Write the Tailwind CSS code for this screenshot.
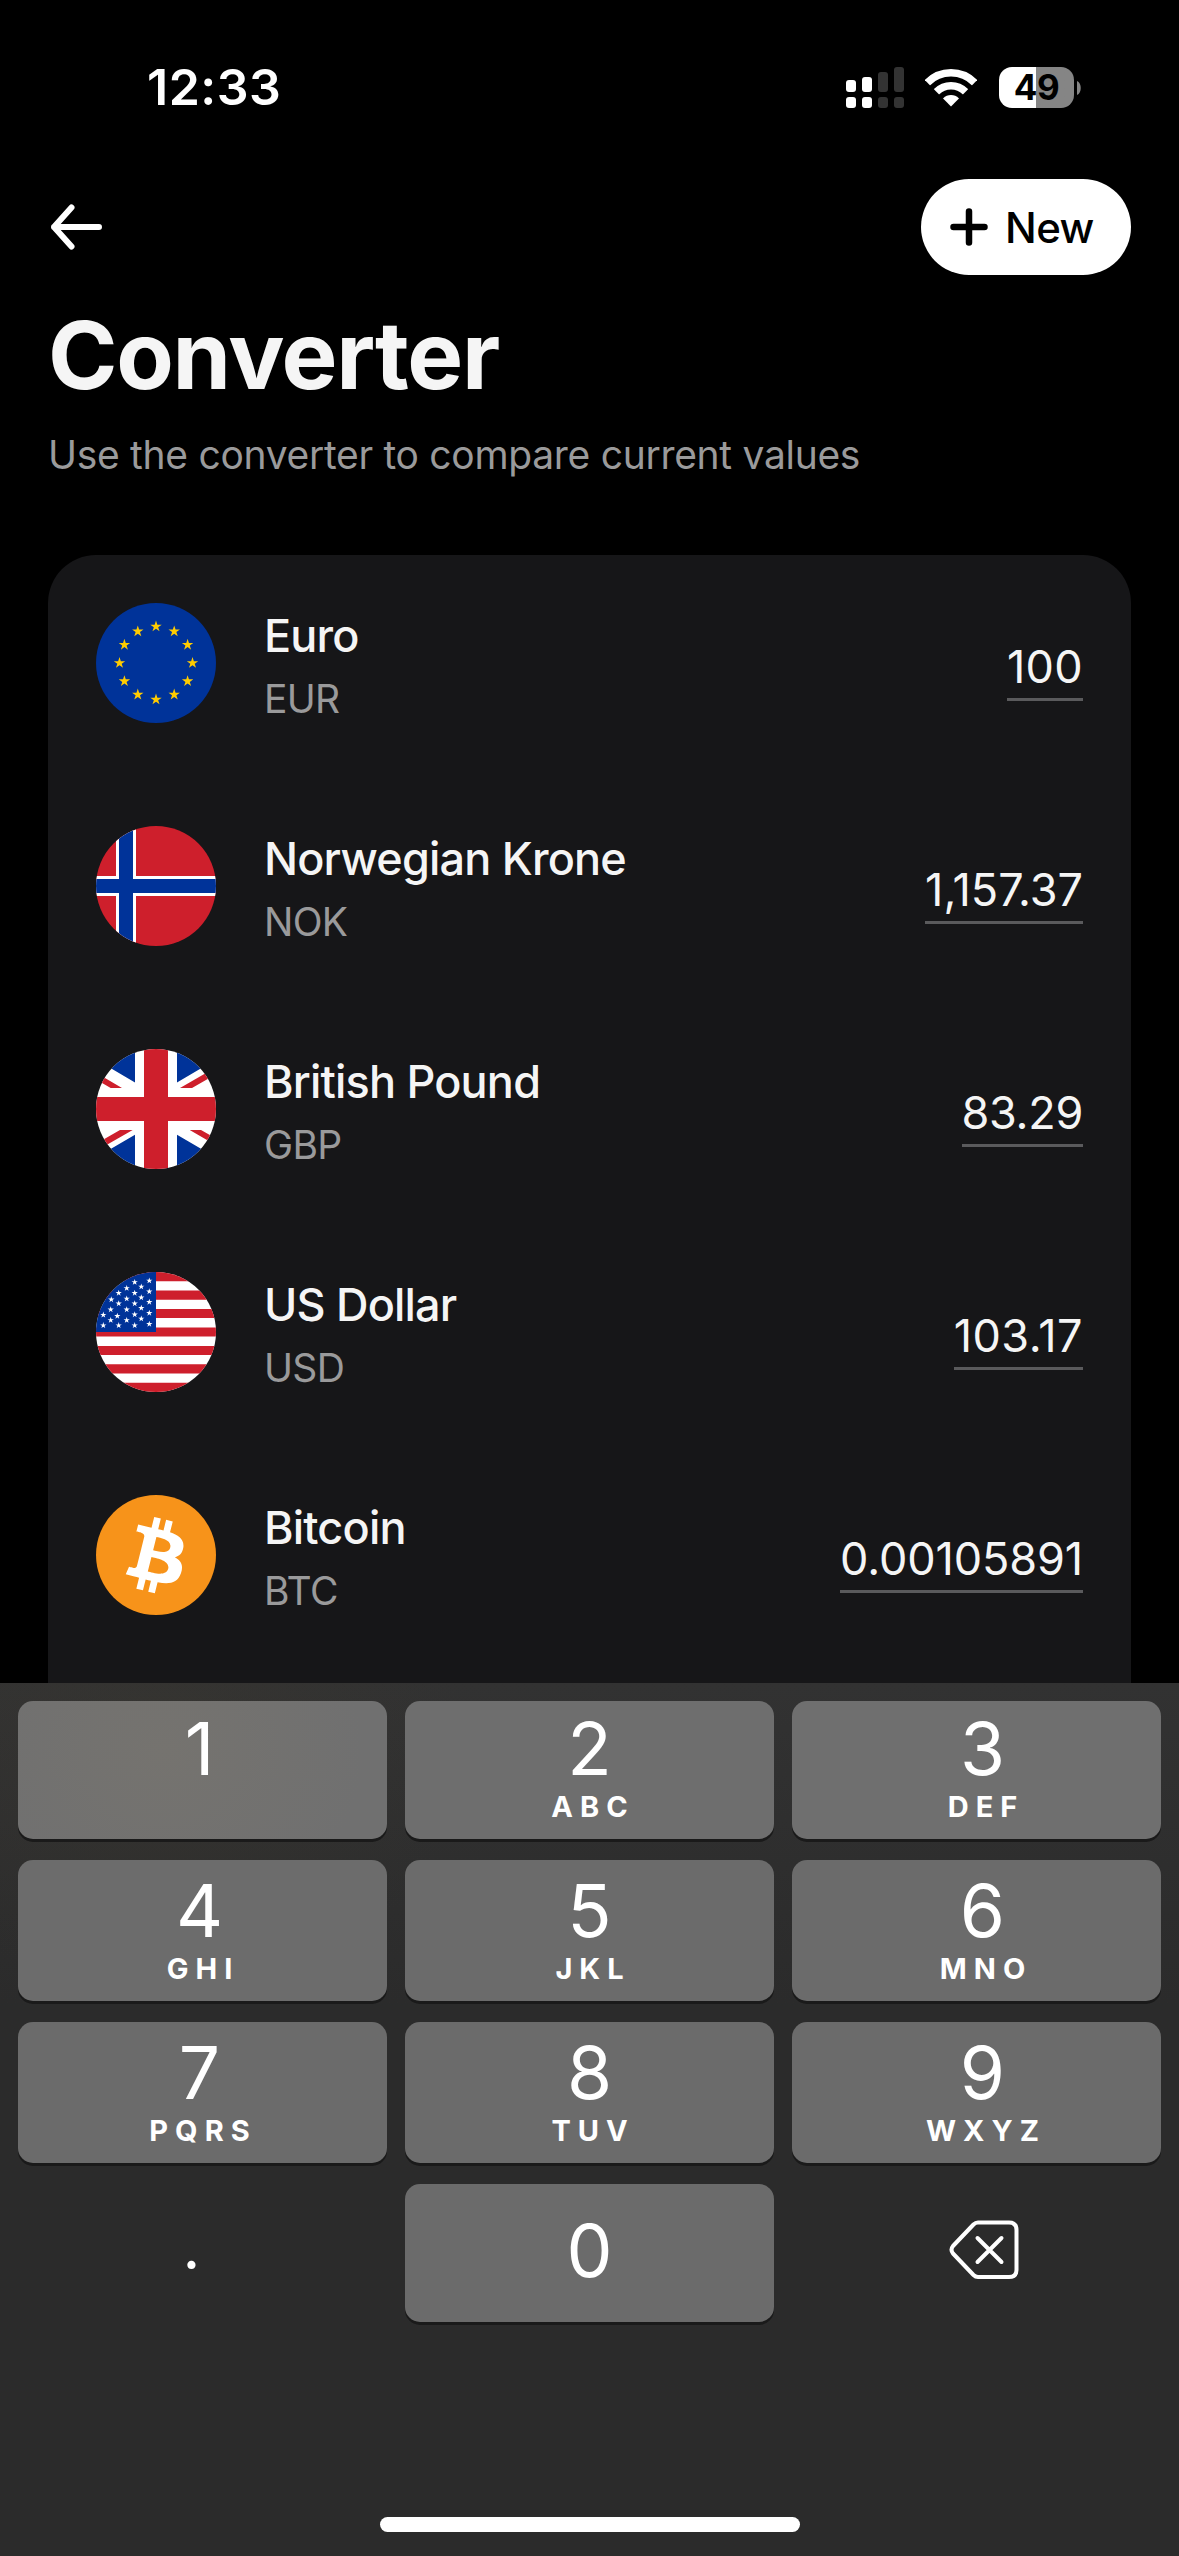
<!DOCTYPE html>
<html lang="en">
<head>
  <meta charset="UTF-8">
  <meta name="viewport" content="width=device-width, initial-scale=1.0">
  <title>Converter</title>
  <script src="https://cdn.jsdelivr.net/npm/@tailwindcss/browser@4"></script>
</head>
<body class="bg-black">
  <!-- shared star shape for the flags, radius 1 -->
  <svg class="hidden">
    <defs>
      <path id="star" d="M0-1 .225-.309H.951L.363.118.588.809 0 .382-.588.809-.363.118-.951-.309H-.225Z" />
    </defs>
  </svg>

  <div class="flex flex-col w-[1179px] h-[2556px] overflow-hidden bg-black text-[#f5f5f5] font-['Inter',sans-serif]">

    <!-- Status bar -->
    <div class="flex justify-between h-[179px] pt-[57px] pl-[147px] pr-[98px] text-white">
      <div class="text-[50px] leading-[61px] font-semibold tracking-[0.5px]">12:33</div>
      <div class="flex items-start pt-[10px]">
        <svg class="w-[59px] h-[41px]" viewBox="0 0 59 41" fill="#fff">
          <rect x="0" y="13" width="10" height="12" rx="3" />
          <rect x="16" y="10" width="10" height="15" rx="3" />
          <rect x="32" y="5" width="10" height="20" rx="3" fill="#333" />
          <rect x="48" y="0" width="10" height="25" rx="3" fill="#333" />
          <rect x="0" y="30" width="10" height="11" rx="3" />
          <rect x="16" y="30" width="10" height="11" rx="3" />
          <rect x="32" y="30" width="10" height="11" rx="3" fill="#333" />
          <rect x="48" y="30" width="10" height="11" rx="3" fill="#333" />
        </svg>
        <svg class="w-[52px] h-[38px] ml-[20px] mt-[2px]" viewBox="0 0 52 38" fill="none" stroke="#fff">
          <clipPath id="wedge"><path d="M26 37.500-12-1V-10H64V-1Z" /></clipPath>
          <g clip-path="url(#wedge)" stroke-width="7.600">
            <circle cx="26" cy="37" r="33.200" />
            <circle cx="26" cy="37" r="20.300" />
            <circle cx="26" cy="37" r="11" fill="#fff" stroke="none" />
          </g>
        </svg>
        <div class="flex items-center justify-center w-[75px] h-[41px] ml-[22px] rounded-[13px] bg-linear-to-r from-white from-[49%] to-[#858585] to-[49%] text-black text-[35px] leading-[41px] font-bold tracking-[-0.5px]">49</div>
        <svg class="w-[4px] h-[14px] ml-[3px] mt-[14px]" viewBox="0 0 4 14" fill="#858585"><path d="M0 0C5 2 5 12 0 14Z" /></svg>
      </div>
    </div>

    <!-- Header -->
    <div class="flex items-center justify-between h-24 px-12">
      <svg class="w-[56px] h-[56px]" viewBox="0 0 56 56" fill="none" stroke="#fff" stroke-width="6" stroke-linecap="round" stroke-linejoin="round">
        <path d="M51 28H6M23.500 8.500 6 28 23.500 47.500" />
      </svg>
      <button class="flex items-center w-[210px] h-24 pl-[29px] rounded-full bg-white text-black text-[42px] leading-[51px] font-medium tracking-[-0.6px]">
        <svg class="w-[38px] h-[38px] mr-[17px]" viewBox="0 0 38 38" stroke="#000" stroke-width="6.500" stroke-linecap="round">
          <path d="M19 3.500V34.500M3.500 19H34.500" />
        </svg>
        New
      </button>
    </div>
    <div class="px-12 pt-[23px] h-[280px]">
      <h1 class="text-[94px] leading-[114px] font-bold tracking-[-1.3px]">Converter</h1>
      <p class="mt-[19px] text-[39px] leading-[48px] text-[#9a9a9b] tracking-[-0.3px]">Use the converter to compare current values</p>
    </div>

    <!-- Currency list -->
    <div class="flex-1 flex flex-col gap-[103px] mx-12 p-12 rounded-t-[48px] bg-[#161618] overflow-hidden min-h-0">
      <div class="flex h-[120px] shrink-0">
        <svg class="w-[120px] h-[120px] rounded-full" viewBox="0 0 120 120">
          <rect width="120" height="120" fill="#039" />
          <g fill="#fc0">
            <use href="#star" transform="translate(60 23.500) scale(6)" />
            <use href="#star" transform="translate(78.200 28.400) scale(6)" />
            <use href="#star" transform="translate(91.600 41.800) scale(6)" />
            <use href="#star" transform="translate(96.500 60) scale(6)" />
            <use href="#star" transform="translate(91.600 78.200) scale(6)" />
            <use href="#star" transform="translate(78.200 91.600) scale(6)" />
            <use href="#star" transform="translate(60 96.500) scale(6)" />
            <use href="#star" transform="translate(41.800 91.600) scale(6)" />
            <use href="#star" transform="translate(28.400 78.200) scale(6)" />
            <use href="#star" transform="translate(23.500 60) scale(6)" />
            <use href="#star" transform="translate(28.400 41.800) scale(6)" />
            <use href="#star" transform="translate(41.800 28.400) scale(6)" />
          </g>
        </svg>
        <div class="flex-1 flex flex-col gap-3 pt-1.5 pl-12">
          <div class="text-[45px] leading-[54px] font-medium tracking-[-0.8px]">Euro</div>
          <div class="text-[39px] leading-[48px] text-[#9a9a9b] tracking-[-0.7px]">EUR</div>
        </div>
        <div class="self-start mt-[37px] pb-1 border-b-[3px] border-[#5a5a5c] text-[45px] leading-[54px] tracking-[0.3px]">100</div>
      </div>

      <div class="flex h-[120px] shrink-0">
        <svg class="w-[120px] h-[120px] rounded-full" viewBox="0 0 120 120">
          <rect width="120" height="120" fill="#ce1f2c" />
          <path d="M30 0V120M0 60H120" stroke="#fff" stroke-width="20" />
          <path d="M30 0V120M0 60H120" stroke="#039" stroke-width="14" />
        </svg>
        <div class="flex-1 flex flex-col gap-3 pt-1.5 pl-12">
          <div class="text-[45px] leading-[54px] font-medium tracking-[-0.8px]">Norwegian Krone</div>
          <div class="text-[39px] leading-[48px] text-[#9a9a9b] tracking-[-0.7px]">NOK</div>
        </div>
        <div class="self-start mt-[37px] pb-1 border-b-[3px] border-[#5a5a5c] text-[45px] leading-[54px]">1,157.37</div>
      </div>

      <div class="flex h-[120px] shrink-0">
        <svg class="w-[120px] h-[120px] rounded-full" viewBox="0 0 120 120">
          <rect width="120" height="120" fill="#fff" />
          <path d="M0 0V10.400L39 33.500V0ZM120 0V10.400L81 33.500V0ZM0 120V108.600L39 85.800V120ZM120 120V108.600L81 85.800V120Z" fill="#039" />
          <path d="M0 23.800 26 39.100H14.700L0 30.400ZM120 18.300 84 39.100H96L120 25.200ZM0 94.800 24 80.900H36.700L0 102ZM120 96.200 93.700 80.900H105L120 89.600Z" fill="#ce1f2c" />
          <path d="M60 0V120M0 60H120" stroke="#ce1f2c" stroke-width="24" />
        </svg>
        <div class="flex-1 flex flex-col gap-3 pt-1.5 pl-12">
          <div class="text-[45px] leading-[54px] font-medium tracking-[-0.8px]">British Pound</div>
          <div class="text-[39px] leading-[48px] text-[#9a9a9b] tracking-[-0.7px]">GBP</div>
        </div>
        <div class="self-start mt-[37px] pb-1 border-b-[3px] border-[#5a5a5c] text-[45px] leading-[54px] tracking-[-0.3px]">83.29</div>
      </div>

      <div class="flex h-[120px] shrink-0">
        <svg class="w-[120px] h-[120px] rounded-full" viewBox="0 0 120 120">
          <rect width="120" height="120" fill="#fff" />
          <path d="M0 4.600H120M0 23.100H120M0 41.500H120M0 60H120M0 78.500H120M0 96.900H120M0 115.400H120" stroke="#ce1f2c" stroke-width="9.230" />
          <rect width="60" height="60" fill="#039" />
          <g fill="#fff">
            <use href="#star" transform="translate(38.700 10.200) scale(3.300)" />
            <use href="#star" transform="translate(53.300 8.700) scale(3.300)" />
            <use href="#star" transform="translate(30.700 16.200) scale(3.300)" />
            <use href="#star" transform="translate(45.300 14.700) scale(3.300)" />
            <use href="#star" transform="translate(22.700 21) scale(3.300)" />
            <use href="#star" transform="translate(38.700 21) scale(3.300)" />
            <use href="#star" transform="translate(53.300 19.600) scale(3.300)" />
            <use href="#star" transform="translate(15.300 27.500) scale(3.300)" />
            <use href="#star" transform="translate(30.700 26.700) scale(3.300)" />
            <use href="#star" transform="translate(45.300 25.600) scale(3.300)" />
            <use href="#star" transform="translate(22.700 31.600) scale(3.300)" />
            <use href="#star" transform="translate(38.700 31.600) scale(3.300)" />
            <use href="#star" transform="translate(53.300 30.100) scale(3.300)" />
            <use href="#star" transform="translate(14.700 37.600) scale(3.300)" />
            <use href="#star" transform="translate(30.700 37.600) scale(3.300)" />
            <use href="#star" transform="translate(45.300 36.100) scale(3.300)" />
            <use href="#star" transform="translate(7.300 42.900) scale(3.300)" />
            <use href="#star" transform="translate(21.300 44) scale(3.300)" />
            <use href="#star" transform="translate(38.700 42.500) scale(3.300)" />
            <use href="#star" transform="translate(53.300 41) scale(3.300)" />
            <use href="#star" transform="translate(14.700 48.200) scale(3.300)" />
            <use href="#star" transform="translate(30.700 48.200) scale(3.300)" />
            <use href="#star" transform="translate(45.300 46.700) scale(3.300)" />
            <use href="#star" transform="translate(7.300 53.400) scale(3.300)" />
            <use href="#star" transform="translate(22.700 53.400) scale(3.300)" />
            <use href="#star" transform="translate(38.700 53.400) scale(3.300)" />
            <use href="#star" transform="translate(53.300 52) scale(3.300)" />
          </g>
        </svg>
        <div class="flex-1 flex flex-col gap-3 pt-1.5 pl-12">
          <div class="text-[45px] leading-[54px] font-medium tracking-[-0.8px]">US Dollar</div>
          <div class="text-[39px] leading-[48px] text-[#9a9a9b] tracking-[-0.7px]">USD</div>
        </div>
        <div class="self-start mt-[37px] pb-1 border-b-[3px] border-[#5a5a5c] text-[45px] leading-[54px] tracking-[0.5px]">103.17</div>
      </div>

      <div class="flex h-[120px] shrink-0">
        <svg class="w-[120px] h-[120px] rounded-full" viewBox="0 0 120 120">
          <rect width="120" height="120" fill="#f7931a" />
          <path transform="translate(-1.500 -1.100) scale(3.830)" fill="#fff" d="M23.189 14.020c.314-2.096-1.283-3.223-3.465-3.975l.708-2.840-1.728-.430-.690 2.765c-.454-.114-.920-.220-1.385-.326l.695-2.783L15.596 6l-.708 2.839c-.376-.086-.746-.170-1.104-.260l.002-.009-2.384-.595-.460 1.846s1.283.294 1.256.312c.700.175.826.638.805 1.006l-.806 3.235c.048.012.110.030.180.057l-.183-.045-1.130 4.532c-.086.212-.303.531-.793.410.018.025-1.256-.313-1.256-.313l-.858 1.978 2.250.561c.418.105.828.215 1.231.318l-.715 2.872 1.727.430.708-2.840c.472.127.930.245 1.378.357l-.706 2.828 1.728.430.715-2.866c2.948.558 5.164.333 6.097-2.333.752-2.146-.037-3.385-1.588-4.192 1.130-.260 1.980-1.003 2.207-2.538zm-3.950 5.538c-.533 2.147-4.148.986-5.320.695l.950-3.805c1.172.293 4.929.872 4.370 3.110zm.535-5.569c-.487 1.953-3.495.960-4.470.717l.860-3.450c.975.243 4.118.696 3.610 2.733z" />
        </svg>
        <div class="flex-1 flex flex-col gap-3 pt-1.5 pl-12">
          <div class="text-[45px] leading-[54px] font-medium tracking-[-0.8px]">Bitcoin</div>
          <div class="text-[39px] leading-[48px] text-[#9a9a9b] tracking-[-0.7px]">BTC</div>
        </div>
        <div class="self-start mt-[37px] pb-1 border-b-[3px] border-[#5a5a5c] text-[45px] leading-[54px] tracking-[-0.1px]">0.00105891</div>
      </div>
    </div>

    <!-- Keypad -->
    <div class="flex flex-col items-center h-[873px] shrink-0 pt-[18px] bg-[#2b2b2b] bg-[radial-gradient(ellipse_300px_260px_at_165px_60px,#3a372f66,transparent),linear-gradient(#323232,#2b2b2b_320px)] text-white">
      <div class="grid grid-cols-3 grid-rows-[138px_141px_141px_138px] gap-x-[18px] gap-y-[21px] w-[1143px] text-[73px] leading-[81px] text-center">
        <div class="flex flex-col justify-end pr-1.5 pb-[14px] rounded-[15px] bg-[#707070] bg-[radial-gradient(ellipse_200px_180px_at_145px_50px,#75736f,transparent)] shadow-[0_3px_0_#1a1a1a]">
          <div>1</div><div class="h-[36px]"></div>
        </div>
        <div class="flex flex-col justify-end pb-[14px] rounded-[15px] bg-[#6e6e6e] shadow-[0_3px_0_#1a1a1a]">
          <div>2</div><div class="text-[29px] leading-[36px] font-bold tracking-[7px] pl-[7px]">ABC</div>
        </div>
        <div class="flex flex-col justify-end pl-3 pb-[14px] rounded-[15px] bg-[#6f6f6f] shadow-[0_3px_0_#1a1a1a]">
          <div>3</div><div class="text-[29px] leading-[36px] font-bold tracking-[7px] pl-[7px]">DEF</div>
        </div>
        <div class="flex flex-col justify-end pr-1.5 pb-[14px] rounded-[15px] bg-[#6c6c6c] shadow-[0_3px_0_#1a1a1a]">
          <div>4</div><div class="text-[29px] leading-[36px] font-bold tracking-[7px] pl-[7px]">GHI</div>
        </div>
        <div class="flex flex-col justify-end pb-[14px] rounded-[15px] bg-[#6b6b6b] shadow-[0_3px_0_#1a1a1a]">
          <div>5</div><div class="text-[29px] leading-[36px] font-bold tracking-[7px] pl-[7px]">JKL</div>
        </div>
        <div class="flex flex-col justify-end pl-3 pb-[14px] rounded-[15px] bg-[#6b6b6b] shadow-[0_3px_0_#1a1a1a]">
          <div>6</div><div class="text-[29px] leading-[36px] font-bold tracking-[7px] pl-[7px]">MNO</div>
        </div>
        <div class="flex flex-col justify-end pr-1.5 pb-[14px] rounded-[15px] bg-[#6b6b6b] shadow-[0_3px_0_#1a1a1a]">
          <div>7</div><div class="text-[29px] leading-[36px] font-bold tracking-[7px] pl-[7px]">PQRS</div>
        </div>
        <div class="flex flex-col justify-end pb-[14px] rounded-[15px] bg-[#6b6b6b] shadow-[0_3px_0_#1a1a1a]">
          <div>8</div><div class="text-[29px] leading-[36px] font-bold tracking-[7px] pl-[7px]">TUV</div>
        </div>
        <div class="flex flex-col justify-end pl-3 pb-[14px] rounded-[15px] bg-[#6b6b6b] shadow-[0_3px_0_#1a1a1a]">
          <div>9</div><div class="text-[29px] leading-[36px] font-bold tracking-[7px] pl-[7px]">WXYZ</div>
        </div>
        <div class="flex items-center justify-center pr-[22px] pb-[13px] text-[62px]">.</div>
        <div class="flex items-center justify-center pb-[6px] rounded-[15px] bg-[#6b6b6b] shadow-[0_3px_0_#1a1a1a]">0</div>
        <div class="flex items-center justify-center pl-[14px] pb-[7px]">
          <svg class="w-[70px] h-[60px]" viewBox="0 0 70 60" fill="none" stroke="#fff" stroke-width="4" stroke-linecap="round" stroke-linejoin="round">
            <path d="M29 2.500H60Q67.500 2.500 67.500 10V50Q67.500 57 60 57H29Q26.500 57 24.500 55L4 33.500Q1 29.700 4 26L24.500 4.500Q26.500 2.500 29 2.500Z" />
            <path d="M28.500 18 52.500 42M52.500 18 28.500 42" />
          </svg>
        </div>
      </div>
      <div class="w-[420px] h-[15px] mt-[195px] rounded-full bg-white"></div>
    </div>
  </div>
</body>
</html>
